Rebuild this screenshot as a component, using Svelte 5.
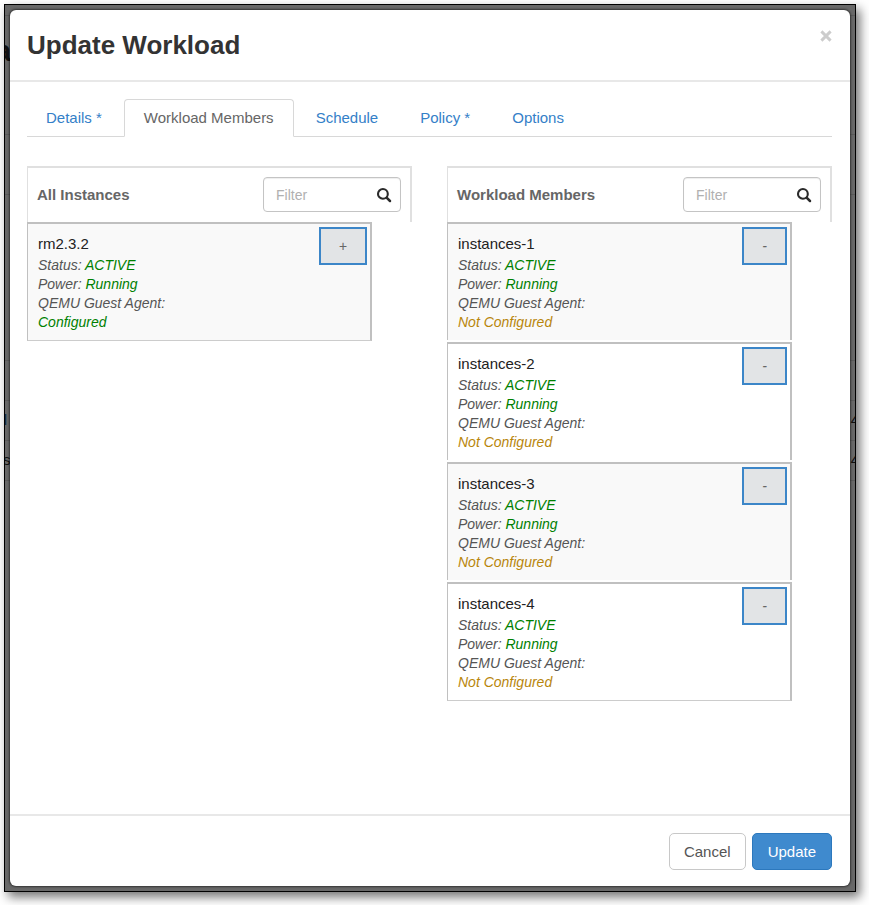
<script>
  const tabs = [
    { id: 'details', label: 'Details *' },
    { id: 'members', label: 'Workload Members' },
    { id: 'schedule', label: 'Schedule' },
    { id: 'policy', label: 'Policy *' },
    { id: 'options', label: 'Options' }
  ];
  let active = $state('members');

  let lists = $state([
    {
      id: 'all',
      title: 'All Instances',
      action: '+',
      hint: 'Add',
      filter: '',
      items: [{ name: 'rm2.3.2', status: 'ACTIVE', power: 'Running', configured: true }]
    },
    {
      id: 'chosen',
      title: 'Workload Members',
      action: '-',
      hint: 'Remove',
      filter: '',
      items: [1, 2, 3, 4].map((n) => ({
        name: `instances-${n}`,
        status: 'ACTIVE',
        power: 'Running',
        configured: false
      }))
    }
  ]);

  const visible = (list) => list.items.filter((item) => item.name.includes(list.filter));

  function move(from, item) {
    const source = lists[from];
    source.items = source.items.filter((other) => other.name !== item.name);
    lists[1 - from].items.push(item);
  }
</script>

<div class="page">
  <div class="frame">
    <div class="behind" aria-hidden="true">
      <span class="rule r1"></span>
      <span class="rule r2"></span>
      <span class="rule r3"></span>
      <span class="rule r4"></span>
      <span class="rule r5"></span>
      <span class="rule r6"></span>
      <span class="rule r7"></span>
      <span class="heading">a</span>
      <span class="left link">l</span>
      <span class="left text">s</span>
      <span class="right first">4</span>
      <span class="right second">4</span>
    </div>

    <div class="modal" role="dialog" aria-labelledby="title">
      <header>
        <h3 id="title">Update Workload</h3>
        <button class="close" type="button" aria-label="Close">
          <svg width="12" height="12" viewBox="0 0 12 12">
            <path d="M1.4 1.4 10.6 10.6M10.6 1.4 1.4 10.6" fill="none" stroke="#ccc" stroke-width="2.9" />
          </svg>
        </button>
      </header>

      <div class="body">
        <nav>
          {#each tabs as tab}
            <a href="#{tab.id}" class:active={active === tab.id} onclick={() => (active = tab.id)}>{tab.label}</a>
          {/each}
        </nav>

        <div class="columns">
          {#each lists as list, index}
            <section>
              <div class="bar">
                <label for="filter-{list.id}">{list.title}</label>
                <div class="search">
                  <input id="filter-{list.id}" type="text" placeholder="Filter" bind:value={list.filter} />
                  <svg width="16" height="16" viewBox="0 0 16 16">
                    <circle cx="6.9" cy="6.9" r="4.9" fill="none" stroke="#2a2a2a" stroke-width="2.1" />
                    <path d="M10.6 10.6 14 14" stroke="#2a2a2a" stroke-width="2.5" stroke-linecap="round" />
                  </svg>
                </div>
              </div>
              <ul>
                {#each visible(list) as item (item.name)}
                  <li>
                    <div class="info">
                      <div class="name">{item.name}</div>
                      <div>Status: <span class="good">{item.status}</span></div>
                      <div>Power: <span class="good">{item.power}</span></div>
                      <div>QEMU Guest Agent:</div>
                      <div class={item.configured ? 'good' : 'warn'}>
                        {item.configured ? 'Configured' : 'Not Configured'}
                      </div>
                    </div>
                    <button
                      class="move"
                      type="button"
                      aria-label="{list.hint} {item.name}"
                      onclick={() => move(index, item)}>{list.action}</button>
                  </li>
                {/each}
              </ul>
            </section>
          {/each}
        </div>
      </div>

      <footer>
        <button class="btn" type="button">Cancel</button>
        <button class="btn primary" type="button">Update</button>
      </footer>
    </div>
  </div>
</div>

<style>
  :global(body) {
    background: #fff;
  }
  .page,
  .page * {
    box-sizing: border-box;
  }
  .page {
    display: flex;
    min-height: 100vh;
    padding: 4px 13px 13px 4px;
    font-family: 'Liberation Sans', Arial, Helvetica, sans-serif;
    font-size: 15px;
    line-height: 20px;
    color: #555;
  }
  button,
  input {
    font: inherit;
  }
  .frame {
    position: relative;
    flex: 1;
    display: flex;
    min-width: 0;
    padding: 5px;
    border: 1px solid #000;
    background: #686868;
    box-shadow: 4px 5px 10px rgba(0, 0, 0, 0.55);
  }
  .behind {
    position: absolute;
    inset: 0;
    overflow: hidden;
    color: #111;
  }
  .behind span {
    position: absolute;
  }
  .behind .rule {
    left: 0;
    right: 0;
    height: 1px;
    background: #5a5a5a;
  }
  .r1 { top: 10px; }
  .r2 { top: 129px; }
  .r3 { top: 189px; }
  .r4 { top: 355px; }
  .r5 { top: 395px; }
  .r6 { top: 435px; }
  .r7 { top: 475px; }
  .heading {
    left: -10px;
    top: 30px;
    font-size: 29px;
    line-height: 32px;
    font-weight: bold;
  }
  .left {
    left: -2px;
  }
  .link {
    top: 405px;
    color: #142c42;
    font-weight: bold;
  }
  .text {
    top: 445px;
  }
  .right {
    right: -4px;
  }
  .first {
    top: 405px;
  }
  .second {
    top: 445px;
  }
  .modal {
    position: relative;
    flex: 1;
    display: flex;
    flex-direction: column;
    min-width: 0;
    border-radius: 6px;
    background: #fff;
    box-shadow: 0 0 2px 1px rgba(0, 0, 0, 0.5);
  }
  header {
    display: flex;
    justify-content: space-between;
    align-items: flex-start;
    padding: 18px 18px 18px 17px;
    border-bottom: 2px solid #e8e8e8;
  }
  h3 {
    margin: 0;
    font-size: 26px;
    line-height: 34px;
    font-weight: bold;
    color: #333;
  }
  .close {
    display: flex;
    padding: 2px 0;
    border: 0;
    background: none;
  }
  .body {
    flex: 1;
    padding: 17px 18px 17px 17px;
  }
  nav {
    display: flex;
    gap: 2px;
    border-bottom: 1px solid #d8d8d8;
  }
  nav a {
    margin-bottom: -1px;
    padding: 8px 19px 8px 18px;
    border: 1px solid transparent;
    border-radius: 4px 4px 0 0;
    color: #3480c8;
    text-decoration: none;
  }
  nav a + a {
    padding-left: 19px;
  }
  nav a.active {
    border-color: #d8d8d8 #d8d8d8 #fff;
    background: #fff;
    color: #666;
  }
  .columns {
    display: grid;
    grid-template-columns: 1fr 1fr;
    gap: 35px;
    margin-top: 29px;
  }
  .bar {
    display: flex;
    align-items: center;
    justify-content: space-between;
    padding: 9px 9px 10px;
    border: solid #e0e0e0;
    border-width: 2px 2px 0 1px;
  }
  .bar label {
    color: #666;
    font-weight: bold;
  }
  .search {
    position: relative;
    width: 138px;
  }
  .search input {
    display: block;
    width: 100%;
    height: 35px;
    padding: 0 36px 0 12px;
    border: 1px solid #c4c4c4;
    border-radius: 4px;
    background: #fff;
    box-shadow: inset 0 1px 1px #eee;
    font-size: 14px;
  }
  .search input::placeholder {
    color: #b0b0b0;
  }
  .search svg {
    position: absolute;
    right: 9px;
    top: 10px;
  }
  ul {
    display: grid;
    gap: 2px;
    margin: 0 40px 0 0;
    padding: 0;
    list-style: none;
  }
  li {
    display: flex;
    justify-content: space-between;
    align-items: flex-start;
    padding: 3px 3px 8px 10px;
    border: solid #c0c0c0;
    border-width: 2px 2px 0 1px;
    font-size: 14px;
    line-height: 19px;
    font-style: italic;
  }
  li:last-child {
    border-bottom: 1px solid #ccc;
  }
  li:nth-child(odd) {
    background: #f9f9f9;
  }
  .info {
    padding-top: 7px;
  }
  .name {
    margin-bottom: 2px;
    font-size: 15px;
    line-height: 20px;
    font-style: normal;
    color: #222;
  }
  .good {
    color: #008000;
  }
  .warn {
    color: #b8860b;
  }
  .move {
    height: 38px;
    padding: 0 18px;
    border: 2px solid #3c86c8;
    background: #e2e4e6;
    color: #666;
  }
  footer {
    display: flex;
    justify-content: flex-end;
    gap: 6px;
    padding: 17px 18px 16px;
    border-top: 2px solid #e8e8e8;
  }
  .btn {
    height: 37px;
    padding: 0 14px;
    border: 1px solid #c8c8c8;
    border-radius: 5px;
    background: #fff;
    color: #555;
  }
  .btn.primary {
    padding: 0 15px;
    border-color: #2c78bd;
    background: #3f8ace;
    color: #fff;
  }
</style>
